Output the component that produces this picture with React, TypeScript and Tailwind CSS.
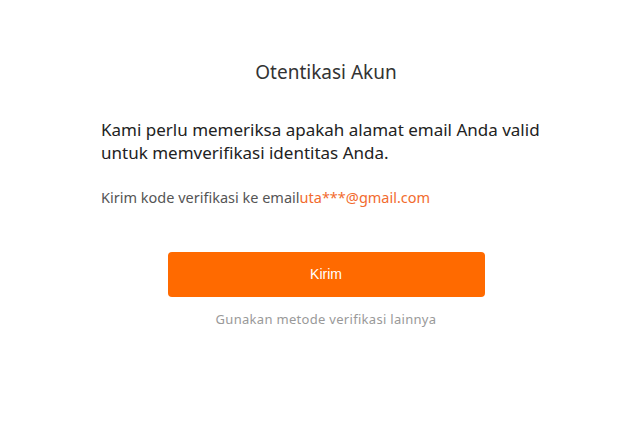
export default function App() {
  return (
    <div
      className="min-h-screen w-full bg-white pl-[12px]"
      style={{ fontFamily: '"Noto Sans", "DejaVu Sans", sans-serif' }}
    >
      <div className="mx-auto flex w-[450px] flex-col pt-[57px]">
        <h1 className="text-center text-[19px] font-normal leading-[30px] text-[#333]">Otentikasi Akun</h1>
        <p className="mt-[31px] text-[17px] leading-[23px] text-[#222]">
          Kami perlu memeriksa apakah alamat email Anda valid untuk memverifikasi identitas Anda.
        </p>
        <p className="mt-[22px] text-[14.5px] leading-[22px] text-[#555]">
          Kirim kode verifikasi ke email<span className="text-[#f26b2e]">uta***@gmail.com</span>
        </p>
        <button
          className="mx-auto mt-[44px] flex h-[45px] w-[317px] items-center justify-center rounded-[4px] bg-[#ff6a00] text-[14px] text-white"
          style={{ fontFamily: '"Liberation Sans", Arial, sans-serif' }}
        >
          Kirim
        </button>
        <p className="mt-[12px] text-center text-[13px] leading-[20px] text-[#999] tracking-[0.3px]">
          Gunakan metode verifikasi lainnya
        </p>
      </div>
    </div>
  );
}
